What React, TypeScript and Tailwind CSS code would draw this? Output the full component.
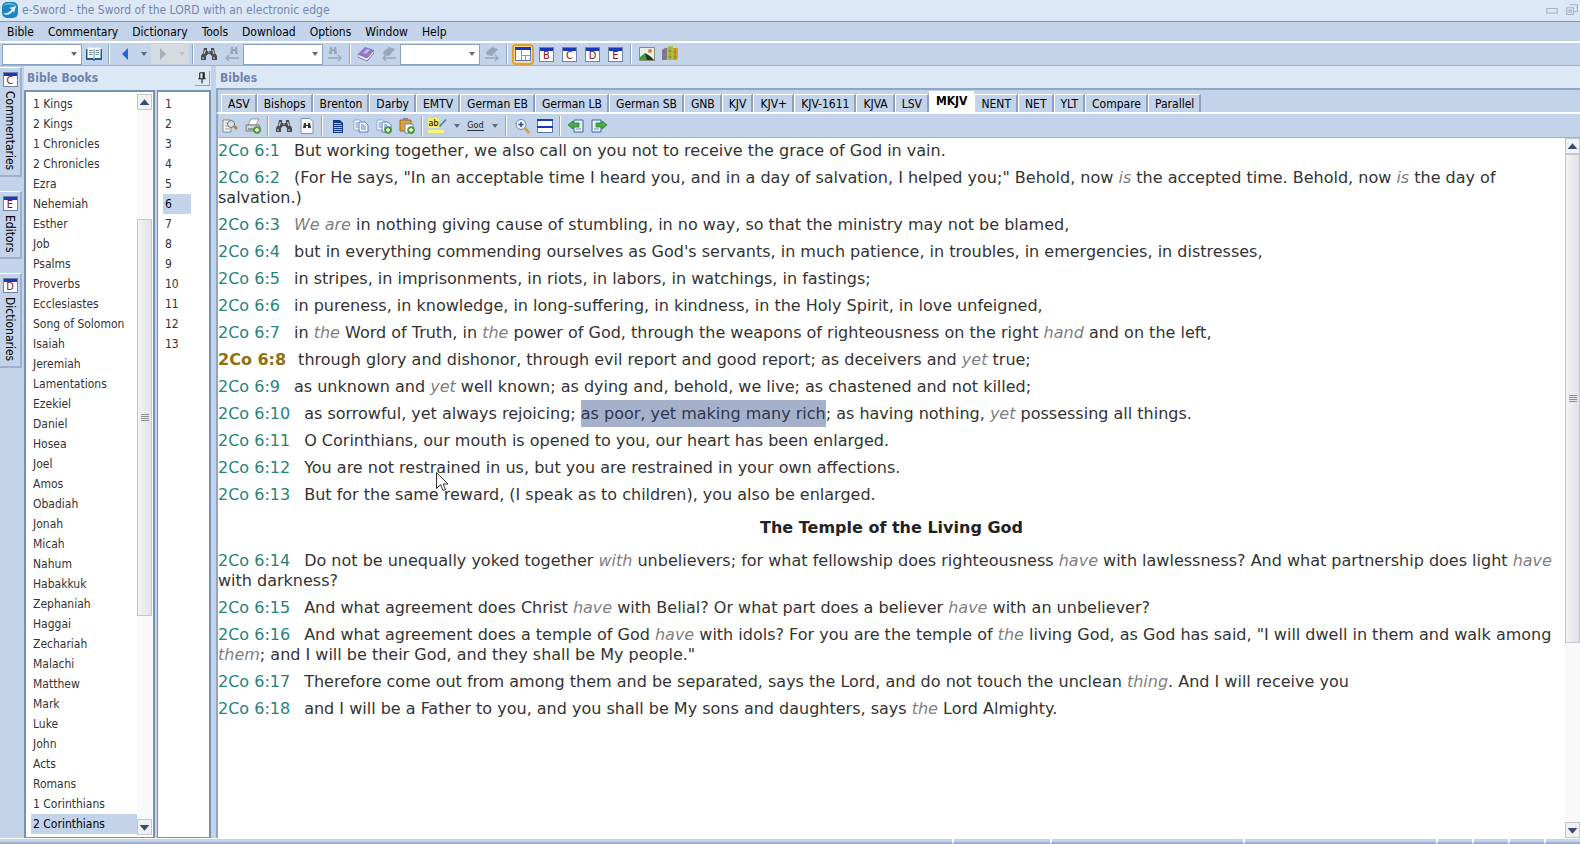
import type { ReactNode } from 'react';

const menus = ['Bible', 'Commentary', 'Dictionary', 'Tools', 'Download', 'Options', 'Window', 'Help'];

const books = [
  '1 Kings', '2 Kings', '1 Chronicles', '2 Chronicles', 'Ezra', 'Nehemiah', 'Esther', 'Job', 'Psalms',
  'Proverbs', 'Ecclesiastes', 'Song of Solomon', 'Isaiah', 'Jeremiah', 'Lamentations', 'Ezekiel', 'Daniel',
  'Hosea', 'Joel', 'Amos', 'Obadiah', 'Jonah', 'Micah', 'Nahum', 'Habakkuk', 'Zephaniah', 'Haggai',
  'Zechariah', 'Malachi', 'Matthew', 'Mark', 'Luke', 'John', 'Acts', 'Romans', '1 Corinthians', '2 Corinthians',
];

const chapters = Array.from({ length: 13 }, (_, i) => i + 1);

const bibles = [
  'ASV', 'Bishops', 'Brenton', 'Darby', 'EMTV', 'German EB', 'German LB', 'German SB', 'GNB', 'KJV', 'KJV+',
  'KJV-1611', 'KJVA', 'LSV', 'MKJV', 'NENT', 'NET', 'YLT', 'Compare', 'Parallel',
];

// _words_ are set in italics, #words# are the current selection
const versesTop = [
  'But working together, we also call on you not to receive the grace of God in vain.',
  '(For He says, "In an acceptable time I heard you, and in a day of salvation, I helped you;" Behold, now _is_ the accepted time. Behold, now _is_ the day of salvation.)',
  '_We are_ in nothing giving cause of stumbling, in no way, so that the ministry may not be blamed,',
  "but in everything commending ourselves as God's servants, in much patience, in troubles, in emergencies, in distresses,",
  'in stripes, in imprisonments, in riots, in labors, in watchings, in fastings;',
  'in pureness, in knowledge, in long-suffering, in kindness, in the Holy Spirit, in love unfeigned,',
  'in _the_ Word of Truth, in _the_ power of God, through the weapons of righteousness on the right _hand_ and on the left,',
  'through glory and dishonor, through evil report and good report; as deceivers and _yet_ true;',
  'as unknown and _yet_ well known; as dying and, behold, we live; as chastened and not killed;',
  'as sorrowful, yet always rejoicing; #as poor, yet making many rich#; as having nothing, _yet_ possessing all things.',
  'O Corinthians, our mouth is opened to you, our heart has been enlarged.',
  'You are not restrained in us, but you are restrained in your own affections.',
  'But for the same reward, (I speak as to children), you also be enlarged.',
];

const versesBottom = [
  'Do not be unequally yoked together _with_ unbelievers; for what fellowship does righteousness _have_ with lawlessness? And what partnership does light _have_ with darkness?',
  'And what agreement does Christ _have_ with Belial? Or what part does a believer _have_ with an unbeliever?',
  'And what agreement does a temple of God _have_ with idols? For you are the temple of _the_ living God, as God has said, "I will dwell in them and walk among _them_; and I will be their God, and they shall be My people."',
  'Therefore come out from among them and be separated, says the Lord, and do not touch the unclean _thing_. And I will receive you',
  'and I will be a Father to you, and you shall be My sons and daughters, says _the_ Lord Almighty.',
];

function format(text: string) {
  return text.split(/(_[^_]+_|#[^#]+#)/).map((part, i) => {
    if (part.startsWith('_')) return <i key={i} className="text-[#7f7f7f]">{part.slice(1, -1)}</i>;
    if (part.startsWith('#')) return <mark key={i} className="bg-[#a5b1ca] py-1 text-[#2d3650]">{part.slice(1, -1)}</mark>;
    return part;
  });
}

function Verse({ n, text }: { n: number; text: string }) {
  return (
    <p>
      <span className={n === 8 ? 'mr-3 font-bold text-[#8f7010]' : 'mr-[14px] text-[#25837a]'}>2Co 6:{n}</span>
      {format(text)}
    </p>
  );
}

function Tool({ label, children, wide }: { label: string; children: ReactNode; wide?: boolean }) {
  return (
    <button aria-label={label} className={`flex h-5 shrink-0 items-center justify-center ${wide ? 'w-[15px]' : 'w-[23px]'}`}>
      {children}
    </button>
  );
}

function Divider() {
  return <span className="mx-[3px] h-5 w-[2px] shrink-0 border-l border-[#8ea5c4] bg-white" />;
}

function Svg({ children, className = 'size-4' }: { children: ReactNode; className?: string }) {
  return <svg viewBox="0 0 16 16" className={`shrink-0 ${className}`}>{children}</svg>;
}

function Caret() {
  return <Svg className="size-2"><path d="M2 4h12l-6 8z" fill="#5f6b7c" /></Svg>;
}

function Combo({ label }: { label: string }) {
  return (
    <span className="relative flex h-[21px] w-20 shrink-0">
      <select aria-label={label} className="w-full appearance-none border border-[#8ba3c3] bg-white" />
      <span className="pointer-events-none absolute right-1 top-[6px] flex"><Caret /></span>
    </span>
  );
}

function LetterIcon({ letter }: { letter: string }) {
  return (
    <span className="flex h-[15px] w-[15px] flex-col border border-[#7183a8] bg-white text-center">
      <span className="h-[3px] shrink-0 bg-[#1539b8]" />
      <span className="text-[11px] leading-[10px] text-[#8c1020]">{letter}</span>
    </span>
  );
}

function Binoculars() {
  return (
    <Svg>
      <path d="M3 2h3v3h4V2h3l1 5 2 3v4h-5v-4L9 8H7l-2 2v4H0v-4l2-3z" fill="#4a4a48" />
      <path d="M2 11v2M4.500 4L3 8M11.500 4L13 8M13 11v2M7 6h2" stroke="#c9ccd0" strokeWidth="1.200" fill="none" />
    </Svg>
  );
}

function FadedSearch({ back, book }: { back?: boolean; book?: boolean }) {
  return (
    <Svg>
      {book ? (
        <path d="M2 6l6-5 6 2-6 7-5-1z" fill="#98a6bb" />
      ) : (
        <path d={back ? 'M7 1h2v2h2V1h2l1 7h-3V5H9v3H6z' : 'M3 1h2v2h2V1h2l1 7H7V5H5v3H2z'} fill="#98a6bb" />
      )}
      <path d={back ? 'M15 12H2M5 9l-3 3 3 3' : 'M1 12h13M11 9l3 3-3 3'} stroke="#98a6bb" strokeWidth="1.300" fill="none" />
    </Svg>
  );
}

function Plus() {
  return (
    <>
      <circle cx="12" cy="12" r="3.500" fill="#4fa52f" stroke="#2f7a1c" strokeWidth=".5" />
      <path d="M12 10v4M10 12h4" stroke="#fff" strokeWidth="1.300" />
    </>
  );
}

function Pages({ plus }: { plus?: boolean }) {
  return (
    <Svg>
      <path d="M1 2h6l2 2v8H1z" fill="#fff" stroke="#7e9bd0" strokeWidth=".8" />
      <path d="M6 4h6l3 3v7H6z" fill="#f2f7ff" stroke="#3f65b0" strokeWidth=".8" />
      <path d="M2.500 5h3M2.500 7h3M2.500 9h3M8 7h3M8 9h5M8 11h5" stroke="#5c86d0" />
      {plus && <Plus />}
    </Svg>
  );
}

function ScrollButton({ label, d }: { label: string; d: string }) {
  return (
    <button aria-label={label} className="flex h-4 shrink-0 items-center justify-center border border-[#c3c6cc] bg-[#f0f1f4]">
      <Svg className="size-[13px]"><path d={d} fill="#3c4a74" /></Svg>
    </button>
  );
}

function ScrollBar({ track }: { track: ReactNode }) {
  return (
    <div className="flex w-[15px] shrink-0 flex-col bg-[#f9f9fa]">
      <ScrollButton label="Scroll up" d="M2 11h12L8 4z" />
      <div className="flex min-h-0 grow flex-col">{track}</div>
      <ScrollButton label="Scroll down" d="M2 5h12l-6 7z" />
    </div>
  );
}

function Thumb({ className }: { className: string }) {
  return (
    <div className={`flex shrink-0 flex-col items-center justify-center gap-px border border-[#c3c6cc] bg-gradient-to-r from-[#f3f3f4] to-[#e2e3e7] ${className}`}>
      <span className="h-px w-2 bg-[#8b8f98]" />
      <span className="h-px w-2 bg-[#8b8f98]" />
      <span className="h-px w-2 bg-[#8b8f98]" />
      <span className="h-px w-2 bg-[#8b8f98]" />
    </div>
  );
}

function SideTab({ letter, label, className }: { letter: string; label: string; className: string }) {
  return (
    <button className={`flex w-[22px] flex-col items-center gap-1 border-b-2 border-r-2 border-t border-b-[#9db1cf] border-r-[#9db1cf] border-t-white bg-[#c3d4ea] pt-1 ${className}`}>
      <LetterIcon letter={letter} />
      <span className="leading-4 [writing-mode:vertical-rl]">{label}</span>
    </button>
  );
}

export default function App() {
  return (
    <div className="relative flex h-screen flex-col overflow-hidden bg-[#c3d4ea] font-['DejaVu_Sans_Condensed','DejaVu_Sans',sans-serif] text-[12px] leading-4 text-black">
      <header className="flex h-[22px] shrink-0 items-center border-b border-[#7e97b7] bg-[#dce8f5] pb-px pl-[2px] text-[#7484b0]">
        <Svg>
          <rect width="16" height="16" rx="5" fill="#1c86c2" />
          <path d="M1 4c3-4 11-4 14 1-4-3-9-3-14-1z" fill="#6fc0ea" />
          <path d="M1 11c4 1 7-1 9-4l-3-1 7-2-2 7-1-2c-3 4-7 5-10 2z" fill="#e6f4fc" />
        </Svg>
        <h1 className="ml-1 grow">e-Sword - the Sword of the LORD with an electronic edge</h1>
        <Svg className="mr-2 size-3"><path d="M1 6h14v6H1z" fill="none" stroke="#a5b2c6" strokeWidth="1.500" /></Svg>
        <Svg className="mr-[2px] size-3"><path d="M5 1h10v9h-4M1 5h9v9H1zM4 8h3v3H4z" fill="none" stroke="#a5b2c6" strokeWidth="1.500" /></Svg>
      </header>

      <nav className="flex h-[21px] shrink-0 items-center gap-[14px] border-b-2 border-white px-[7px]">
        {menus.map((m) => <button key={m}>{m}</button>)}
      </nav>

      <div className="flex h-[23px] shrink-0 items-center border-b border-[#9aafcb] pl-[2px]">
        <Combo label="Reference" />
        <Tool label="Go to reference">
          <Svg>
            <path d="M0 3h16v11h-7l-1 1-1-1H0z" fill="#1d5f92" />
            <path d="M1.500 1.500h5.500l1 1 1-1h5.500v10.500H9l-1 1-1-1H1.500z" fill="#f6fafc" />
            <path d="M3 4.500h3.500M3 6.500h3.500M3 8.500h3.500M9.500 4.500H13M9.500 6.500H13M9.500 8.500H13M8 3v9" stroke="#7b8fa3" />
          </Svg>
        </Tool>
        <Divider />
        <Tool label="Back"><Svg><path d="M11 2v12L5 8z" fill="#2368d8" /></Svg></Tool>
        <Tool label="Back history" wide><Caret /></Tool>
        <span className="flex bg-[#d6dae1]">
          <Tool label="Forward"><Svg><path d="M5 2v12l6-6z" fill="#a9b0bd" /></Svg></Tool>
          <Tool label="Forward history" wide><Svg className="size-2"><path d="M2 4h12l-6 8z" fill="#bcc1ca" /></Svg></Tool>
        </span>
        <Divider />
        <Tool label="Search"><Binoculars /></Tool>
        <Tool label="Previous result"><FadedSearch back /></Tool>
        <Combo label="Search results" />
        <Tool label="Next result"><FadedSearch /></Tool>
        <Divider />
        <Tool label="Dictionary lookup">
          <Svg>
            <path d="M0 8l7-7 9 3-7 8z" fill="#8f7ac8" />
            <path d="M0 8l9 4 7-8v3l-7 8-9-4z" fill="#f1edfa" stroke="#6a56a6" strokeWidth=".8" />
            <path d="M5 7l4-4 3 1-4 4z" fill="#c4b6ea" />
          </Svg>
        </Tool>
        <Tool label="Previous entry"><FadedSearch back book /></Tool>
        <Combo label="Dictionary entries" />
        <Tool label="Next entry"><FadedSearch book /></Tool>
        <Divider />
        <button aria-label="Layout" className="mx-px flex h-[21px] w-[22px] shrink-0 items-center justify-center rounded-sm border-2 border-[#dfa03c] bg-[#fbdc93]">
          <Svg>
            <path d="M.5 1.500h15v13H.5z" fill="#fff" stroke="#5674b0" />
            <path d="M0 1h16v3H0z" fill="#1539b8" />
            <path d="M6 9.500h9M6.500 4v10M10.500 9.500V14" stroke="#7d96c6" />
          </Svg>
        </button>
        {['B', 'C', 'D', 'E'].map((l) => <Tool key={l} label={`${l} window`}><LetterIcon letter={l} /></Tool>)}
        <Divider />
        <Tool label="Graphics viewer">
          <Svg>
            <path d="M.5 1.500h15v13H.5z" fill="#e9f0ea" stroke="#8b8f70" />
            <path d="M1 14V11l5-4 8 7z" fill="#3f9a48" />
            <path d="M6 7l5 3 4 4H8z" fill="#173b22" />
            <circle cx="11" cy="5" r="2" fill="#ed7a2a" />
          </Svg>
        </Tool>
        <Tool label="Library">
          <Svg>
            <path d="M0 4l3-2h3v12H0z" fill="#8d74b3" />
            <path d="M5 2l2-2h4v14H5z" fill="#b4c438" />
            <path d="M11 2h5v11l-2 1h-3z" fill="#e0a32c" />
            <path d="M2 3v11M0 6h5M0 11h5M6 5h4M6 11h4M11 6h4M11 11h4M8 1v13M13 2v12" stroke="#6f7d32" strokeWidth=".7" />
          </Svg>
        </Tool>
      </div>

      <div className="flex min-h-0 grow">
        <aside className="flex w-6 shrink-0 flex-col gap-[14px] bg-[#c3d4ea] pt-px">
          <SideTab letter="C" label="Commentaries" className="h-[110px]" />
          <SideTab letter="E" label="Editors" className="h-[68px]" />
          <SideTab letter="D" label="Dictionaries" className="h-[95px]" />
        </aside>

        <section className="flex w-[187px] shrink-0 flex-col">
          <div className="flex h-6 shrink-0 items-center justify-between bg-[#dce8f5] pl-[3px] font-bold text-[#6f83ac]">
            <h2>Bible Books</h2>
            <button aria-label="Pin panel" className="mr-px flex size-[15px] items-center justify-center border-b border-r border-[#8ba3c3]">
              <Svg className="size-3"><path d="M5 1h6v8h2M5 1v8H3h10M8 9v6M9.500 1v8" stroke="#222" strokeWidth="1.500" fill="none" /></Svg>
            </button>
          </div>
          <div className="flex min-h-0 grow gap-[2px]">
            <div className="flex w-[131px] shrink-0 border-2 border-b border-[#7590b3] bg-white py-[2px] pl-[5px] pr-px">
              <ul className="min-w-0 grow overflow-hidden whitespace-nowrap text-[#333]">
                {books.map((b) => (
                  <li key={b} className={b === '2 Corinthians' ? 'h-5 bg-[#c3d4ea] pl-[2px] leading-5 text-black' : 'h-5 pl-[2px] leading-5'}>{b}</li>
                ))}
              </ul>
              <ScrollBar track={<><div className="h-[109px] shrink-0" /><Thumb className="h-[397px]" /></>} />
            </div>
            <ul className="grow border-2 border-b border-l border-[#7590b3] bg-white py-[2px] pl-[5px] pr-[18px] text-[#333]">
              {chapters.map((c) => (
                <li key={c} className={c === 6 ? 'h-5 bg-[#c3d4ea] pl-[2px] leading-5 text-black' : 'h-5 pl-[2px] leading-5'}>{c}</li>
              ))}
            </ul>
          </div>
        </section>

        <main className="ml-[5px] flex min-w-0 grow flex-col">
          <h2 className="h-6 shrink-0 border-b-2 border-[#8fa6c4] bg-[#dce8f5] pl-1 font-bold leading-6 text-[#6f83ac]">Bibles</h2>
          <div className="flex h-[23px] shrink-0 items-end border-b border-l-2 border-b-white border-l-[#8fa6c4] pl-[3px]">
            {bibles.map((b) =>
              b === 'MKJV' ? (
                <button key={b} className="h-[21px] bg-white px-[7px] pb-[2px] font-bold">{b}</button>
              ) : (
                <button key={b} className="h-[18px] whitespace-nowrap border-l border-r-2 border-t border-l-white border-r-[#8ea2c0] border-t-white pl-[6px] pr-[5px]">{b}</button>
              ),
            )}
          </div>
          <div className="flex h-[25px] shrink-0 items-center border-b border-l-2 border-t border-b-[#9aafcb] border-l-[#8fa6c4] border-t-white">
            <Tool label="Print preview">
              <Svg>
                <path d="M1 2h8v12H1z" fill="#f5f5f5" stroke="#777" strokeWidth=".8" />
                <path d="M3 5h3M3 8h4M3 11h5" stroke="#999" />
                <circle cx="9" cy="6" r="3.500" fill="#d7e1eb" stroke="#777" />
                <path d="M12 8l3 3" stroke="#c67a2c" strokeWidth="2.500" />
              </Svg>
            </Tool>
            <Tool label="Print">
              <Svg>
                <path d="M6 1h8l-3 6H3z" fill="#fff" stroke="#777" strokeWidth=".7" />
                <path d="M1 7h13l1 2v4H1z" fill="#d4d8dc" stroke="#666" strokeWidth=".8" />
                <path d="M3 11h8" stroke="#555" />
                <Plus />
              </Svg>
            </Tool>
            <Divider />
            <Tool label="Find"><Binoculars /></Tool>
            <Tool label="Find in page">
              <Svg>
                <path d="M2 .5h9l3 3v12H2z" fill="#f5f6f8" stroke="#8a93a5" />
                <path d="M5 5h2v2h2V5h2l1 5H9V8H7v2H4z" fill="#333" />
              </Svg>
            </Tool>
            <Divider />
            <Tool label="Select all">
              <Svg><path d="M3 2h7l3 3v10H3z" fill="#173b8c" /><path d="M4 5.500h7M4 7.500h8M4 9.500h8M4 11.500h8M4 13.500h8" stroke="#b8caee" strokeWidth=".9" /></Svg>
            </Tool>
            <Tool label="Copy"><Pages /></Tool>
            <Tool label="Copy verses"><Pages plus /></Tool>
            <Tool label="Paste">
              <Svg>
                <path d="M1 2h11v11H1z" fill="#e0a040" stroke="#a0651b" />
                <path d="M4 0h5v3H4z" fill="#8a8a8a" />
                <path d="M6 6h8v9H6z" fill="#fff" stroke="#7b8799" />
                <Plus />
              </Svg>
            </Tool>
            <Divider />
            <Tool label="Highlight">
              <span className="flex flex-col gap-[2px]">
                <span className="flex items-center text-[9px] leading-[10px]">
                  <span className="bg-[#f4f06a]">ab</span>
                  <Svg className="size-2"><path d="M1 15L14 1" stroke="#5a6f9a" strokeWidth="3" /></Svg>
                </span>
                <span className="h-[3px] w-4 bg-[#fbf86a]" />
              </span>
            </Tool>
            <Tool label="Highlight colors" wide><Caret /></Tool>
            <Tool label="Formatting"><span className="border-b border-[#333] text-[9px] leading-[10px] text-[#222]">God</span></Tool>
            <Tool label="Formatting options" wide><Caret /></Tool>
            <Divider />
            <Tool label="Zoom">
              <Svg>
                <circle cx="7" cy="6.500" r="5" fill="#e9f1fa" stroke="#7a8699" />
                <path d="M7 4v5M4.500 6.500h5" stroke="#234c9e" strokeWidth="1.500" />
                <path d="M11 10l4 5" stroke="#d19a3c" strokeWidth="2.500" />
              </Svg>
            </Tool>
            <Tool label="Split window">
              <Svg><path d="M.5 1.500h15v13H.5z" fill="#fff" stroke="#5674b0" /><path d="M0 1h16v2H0zM0 8h16v2H0z" fill="#1539b8" /></Svg>
            </Tool>
            <Divider />
            <Tool label="Previous chapter">
              <Svg>
                <path d="M6 2h9v12H6z" fill="#e9f2fa" stroke="#3f6697" />
                <path d="M8 11h5" stroke="#6b8fc0" />
                <path d="M0 7l5-4v2h6v4H5v2z" fill="#4fae4c" stroke="#1d6e28" strokeWidth=".7" />
              </Svg>
            </Tool>
            <Tool label="Next chapter">
              <Svg>
                <path d="M1 2h9v12H1z" fill="#e9f2fa" stroke="#3f6697" />
                <path d="M3 11h5" stroke="#6b8fc0" />
                <path d="M16 7l-5-4v2H5v4h6v2z" fill="#4fae4c" stroke="#1d6e28" strokeWidth=".7" />
              </Svg>
            </Tool>
          </div>

          <div className="flex min-h-0 grow border-l-2 border-[#8fa6c4] bg-white">
            <article className="min-w-0 grow overflow-hidden pt-[3px] font-['DejaVu_Sans',sans-serif] text-[16px] leading-5 text-[#333]">
              <div className="flex flex-col gap-[7px]">
                {versesTop.map((t, i) => <Verse key={i} n={i + 1} text={t} />)}
              </div>
              <h3 className="py-[13px] text-center font-bold text-[#222]">The Temple of the Living God</h3>
              <div className="flex flex-col gap-[7px]">
                {versesBottom.map((t, i) => <Verse key={i} n={i + 14} text={t} />)}
              </div>
            </article>
            <ScrollBar track={<Thumb className="h-[489px]" />} />
          </div>
        </main>
      </div>

      <footer className="flex h-[6px] shrink-0 border-t border-white">
        <span className="grow border-b-2 border-[#9db1cf]" />
        <span className="w-[98px] border-b-2 border-l-2 border-b-[#9db1cf] border-l-white" />
        <span className="w-[193px] border-b-2 border-l-2 border-b-[#9db1cf] border-l-white" />
        <span className="w-[193px] border-b-2 border-l-2 border-b-[#9db1cf] border-l-white" />
        <span className="w-9 border-b-2 border-l-2 border-b-[#9db1cf] border-l-white" />
        <span className="w-9 border-b-2 border-l-2 border-b-[#9db1cf] border-l-white" />
        <span className="w-9 border-b-2 border-l-2 border-b-[#9db1cf] border-l-white" />
        <span className="w-9 border-b-2 border-l-2 border-b-[#9db1cf] border-l-white" />
      </footer>

      {/* mouse pointer */}
      <svg viewBox="0 0 12 19" className="pointer-events-none absolute left-[436px] top-[472px] h-[19px] w-3">
        <path d="M.5.5v16l4-4 2.500 6 2.500-1-2.500-5.500h5z" fill="#fff" stroke="#333" />
      </svg>
    </div>
  );
}
